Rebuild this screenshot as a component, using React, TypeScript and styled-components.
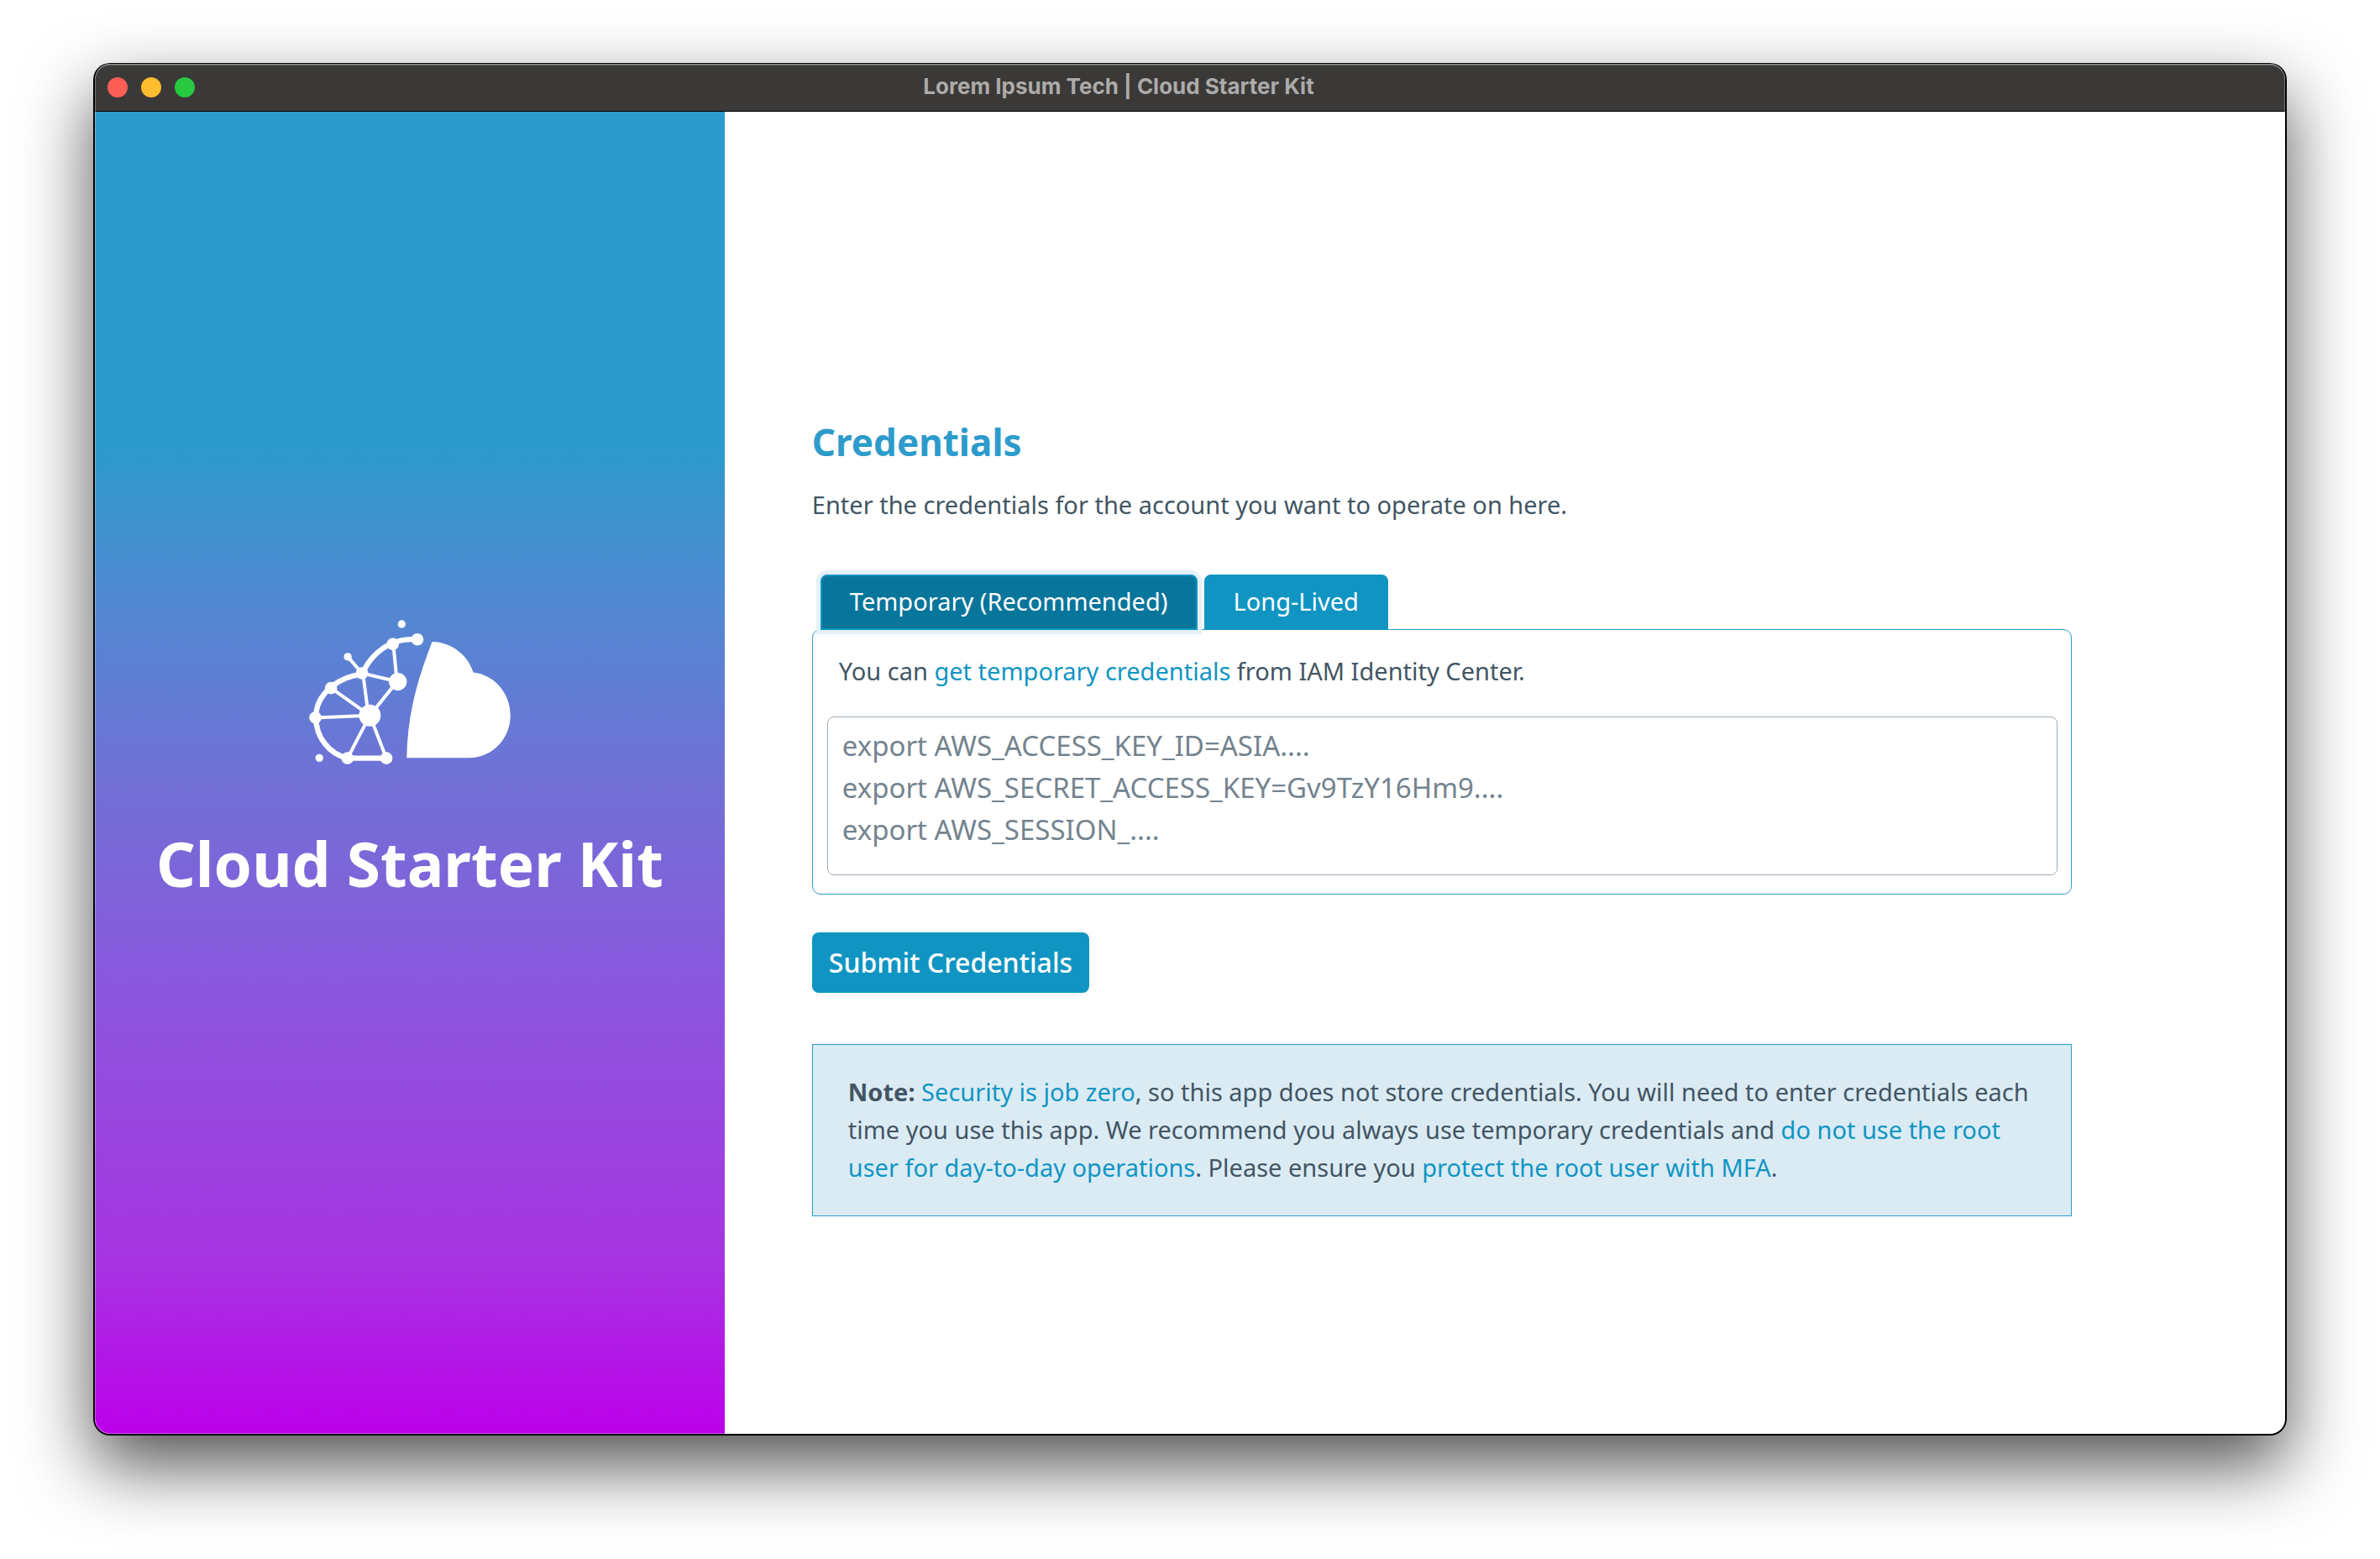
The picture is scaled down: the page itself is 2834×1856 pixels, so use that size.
import React, { useState } from "react";
import styled, { createGlobalStyle } from "styled-components";

const color = {
  accent: "#1095c3",
  accentDark: "#08759b",
  outline: "#2d9bcb",
  ring: "#e5f0f7",
  noteFill: "#dbebf4",
  text: "#425563",
  placeholder: "#74838f",
  inputBorder: "#9dabb8",
};

const GlobalStyle = createGlobalStyle`
  *, *::before, *::after { box-sizing: border-box; }
  body { margin: 0; background: #fff; }
  body, button, textarea { font-family: "Noto Sans", "Open Sans", sans-serif; }
`;

const Desktop = styled.div`
  display: flex;
  min-height: 100vh;
  padding: 75px 111px 147px;
`;

const Window = styled.div`
  position: relative;
  display: flex;
  flex: 1;
  flex-direction: column;
  min-width: 0;
  overflow: hidden;
  border: solid #000;
  border-width: 1px 2px 2px;
  border-radius: 20px;
  background: #fff;
  box-shadow: 0 36px 84px rgba(0, 0, 0, 0.68);

  &::after {
    content: "";
    position: absolute;
    inset: 0;
    border-radius: 18px;
    box-shadow: inset 0 0 0 1px rgba(255, 255, 255, 0.32), inset 0 2px 0 rgba(255, 255, 255, 0.2);
    pointer-events: none;
  }
`;

const TitleBar = styled.header`
  display: flex;
  align-items: center;
  height: 57px;
  padding: 0 289px 0 15px;
  border-bottom: 1px solid #000;
  background: #3a3937;
`;

const WindowControls = styled.div`
  display: flex;
  gap: 16px;
`;

const ControlDot = styled.button<{ $fill: string }>`
  width: 24px;
  height: 24px;
  padding: 0;
  border: 0;
  border-radius: 50%;
  background: ${(p) => p.$fill};
`;

const WindowTitle = styled.div`
  flex: 1;
  padding-bottom: 2px;
  color: #adabaa;
  font: 700 26px/32px Inter, sans-serif;
  text-align: center;
`;

const Body = styled.div`
  display: flex;
  flex: 1;
`;

const Brand = styled.aside`
  display: flex;
  flex: 0 0 28.75%;
  flex-direction: column;
  align-items: center;
  justify-content: center;
  gap: 68px;
  padding-bottom: 25px;
  background: linear-gradient(
    #2b9bcb 0%,
    #2b9bcb 25%,
    #5189d2 37%,
    #7270d6 51%,
    #8f52de 69%,
    #a734e2 87%,
    #bc00ea 100%
  );
`;

const BrandName = styled.h1`
  margin: 0;
  color: #fff;
  font-size: 73px;
  font-weight: 700;
  line-height: 100px;
  white-space: nowrap;
`;

const Main = styled.main`
  display: flex;
  flex: 1;
  flex-direction: column;
  justify-content: center;
  min-width: 0;
  padding: 104px 104px 0;
`;

const Content = styled.div`
  max-width: 1500px;
`;

const Heading = styled.h2`
  margin: 0 0 22px;
  color: ${color.outline};
  font-size: 44px;
  font-weight: 700;
  line-height: 60px;
`;

const Text = styled.p`
  margin: 0;
  color: ${color.text};
  font-size: 29px;
  line-height: 45px;
`;

const Link = styled.a`
  color: ${color.accent};
  text-decoration: none;
`;

const TabList = styled.div`
  display: flex;
  gap: 8px;
  margin: 61px 0 -1px 10px;
`;

const Tab = styled.button<{ $active: boolean }>`
  height: 66px;
  padding: 0 33px 4px;
  border: 2px solid ${color.accent};
  border-radius: 8px 8px 0 0;
  background: ${(p) => (p.$active ? color.accentDark : color.accent)};
  box-shadow: ${(p) => (p.$active ? `0 0 0 5px ${color.ring}` : "none")};
  color: #fff;
  font-size: 29px;
  line-height: 45px;
`;

const Panel = styled.div`
  padding: 26px 16px 22px 17px;
  border: 1px solid ${color.outline};
  border-radius: 10px;
`;

const PanelLabel = styled.label`
  display: block;
  padding: 0 14px;
  color: ${color.text};
  font-size: 29px;
  line-height: 45px;
`;

const KeysInput = styled.textarea`
  display: block;
  width: 100%;
  height: 189px;
  margin-top: 32px;
  padding: 9px 17px;
  border: 1px solid ${color.inputBorder};
  border-radius: 8px;
  outline: none;
  background: #fff;
  color: ${color.text};
  font-size: 33px;
  line-height: 50px;
  resize: none;

  &::placeholder {
    color: ${color.placeholder};
    opacity: 1;
  }
`;

const SubmitButton = styled.button`
  display: block;
  height: 72px;
  margin: 45px 0 61px;
  padding: 0 20px;
  border: 0;
  border-radius: 8px;
  background: ${color.accent};
  color: #fff;
  font-size: 32px;
  font-weight: 500;
  line-height: 50px;
`;

const Note = styled(Text)`
  padding: 33px 42px 35px;
  border: 1px solid ${color.outline};
  background: ${color.noteFill};
`;

const smallNodes: [number, number][] = [
  [471, 124], [383, 141], [273, 245], [162, 298], [106, 404], [221, 549], [360, 549],
];
const looseDots: [number, number][] = [[415, 69], [120, 548], [222, 186]];

function CloudLogo() {
  return (
    <svg width="240" height="172" viewBox="84 54 720 517" fill="#fff" aria-hidden="true">
      <g fill="none" stroke="#fff" strokeWidth="19">
        <path d="M471 124 C430 122 405 127 383 137 C330 158 291 205 276 245" />
        <path d="M273 250 C230 252 195 268 162 294 C126 325 107 365 108 404 C108 472 153 533 221 549 H360" />
      </g>
      <path
        d="M222 186 L273 245 L401 275 M385 141 L398 275 L301 396 M276 245 L296 396 M162 298 L301 396 M106 404 L301 396 M221 549 L301 396 L360 549"
        fill="none"
        stroke="#fff"
        strokeWidth="12"
      />
      {looseDots.map(([x, y]) => <circle key={`${x}-${y}`} cx={x} cy={y} r="14" />)}
      {smallNodes.map(([x, y]) => <circle key={`${x}-${y}`} cx={x} cy={y} r="22" />)}
      <circle cx="401" cy="275" r="32" />
      <circle cx="301" cy="396" r="39" />
      <path d="M524 132 C593 133 653 180 671 242 C746 250 804 316 804 396 C804 480 738 548 655 548 H433 C435 400 468 275 524 132 Z" />
    </svg>
  );
}

const temporaryKeys = "export AWS_ACCESS_KEY_ID=ASIA....\nexport AWS_SECRET_ACCESS_KEY=Gv9TzY16Hm9....\nexport AWS_SESSION_....";
const longLivedKeys = "export AWS_ACCESS_KEY_ID=AKIA....\nexport AWS_SECRET_ACCESS_KEY=Gv9TzY16Hm9....";

export default function App() {
  const [temporary, setTemporary] = useState(true);
  return (
    <>
      <GlobalStyle />
      <Desktop>
        <Window>
          <TitleBar>
            <WindowControls>
              <ControlDot type="button" aria-label="Close" $fill="#ff5f57" />
              <ControlDot type="button" aria-label="Minimize" $fill="#febc2e" />
              <ControlDot type="button" aria-label="Zoom" $fill="#28c840" />
            </WindowControls>
            <WindowTitle>Lorem Ipsum Tech | Cloud Starter Kit</WindowTitle>
          </TitleBar>
          <Body>
            <Brand>
              <CloudLogo />
              <BrandName>Cloud Starter Kit</BrandName>
            </Brand>
            <Main>
              <Content>
                <Heading>Credentials</Heading>
                <Text>Enter the credentials for the account you want to operate on here.</Text>
                <TabList role="tablist">
                  <Tab type="button" role="tab" aria-selected={temporary} $active={temporary} onClick={() => setTemporary(true)}>
                    Temporary (Recommended)
                  </Tab>
                  <Tab type="button" role="tab" aria-selected={!temporary} $active={!temporary} onClick={() => setTemporary(false)}>
                    Long-Lived
                  </Tab>
                </TabList>
                <Panel role="tabpanel">
                  <PanelLabel htmlFor="keys">
                    You can <Link href="#temporary">get temporary credentials</Link> from IAM Identity Center.
                  </PanelLabel>
                  <KeysInput id="keys" spellCheck={false} placeholder={temporary ? temporaryKeys : longLivedKeys} />
                </Panel>
                <SubmitButton type="button">Submit Credentials</SubmitButton>
                <Note>
                  <strong>Note:</strong> <Link href="#security">Security is job zero</Link>, so this app does not store
                  credentials. You will need to enter credentials each time you use this app. We recommend you always
                  use temporary credentials and{" "}
                  <Link href="#root-user">do not use the root user for day-to-day operations</Link>. Please ensure you{" "}
                  <Link href="#mfa">protect the root user with MFA</Link>.
                </Note>
              </Content>
            </Main>
          </Body>
        </Window>
      </Desktop>
    </>
  );
}
